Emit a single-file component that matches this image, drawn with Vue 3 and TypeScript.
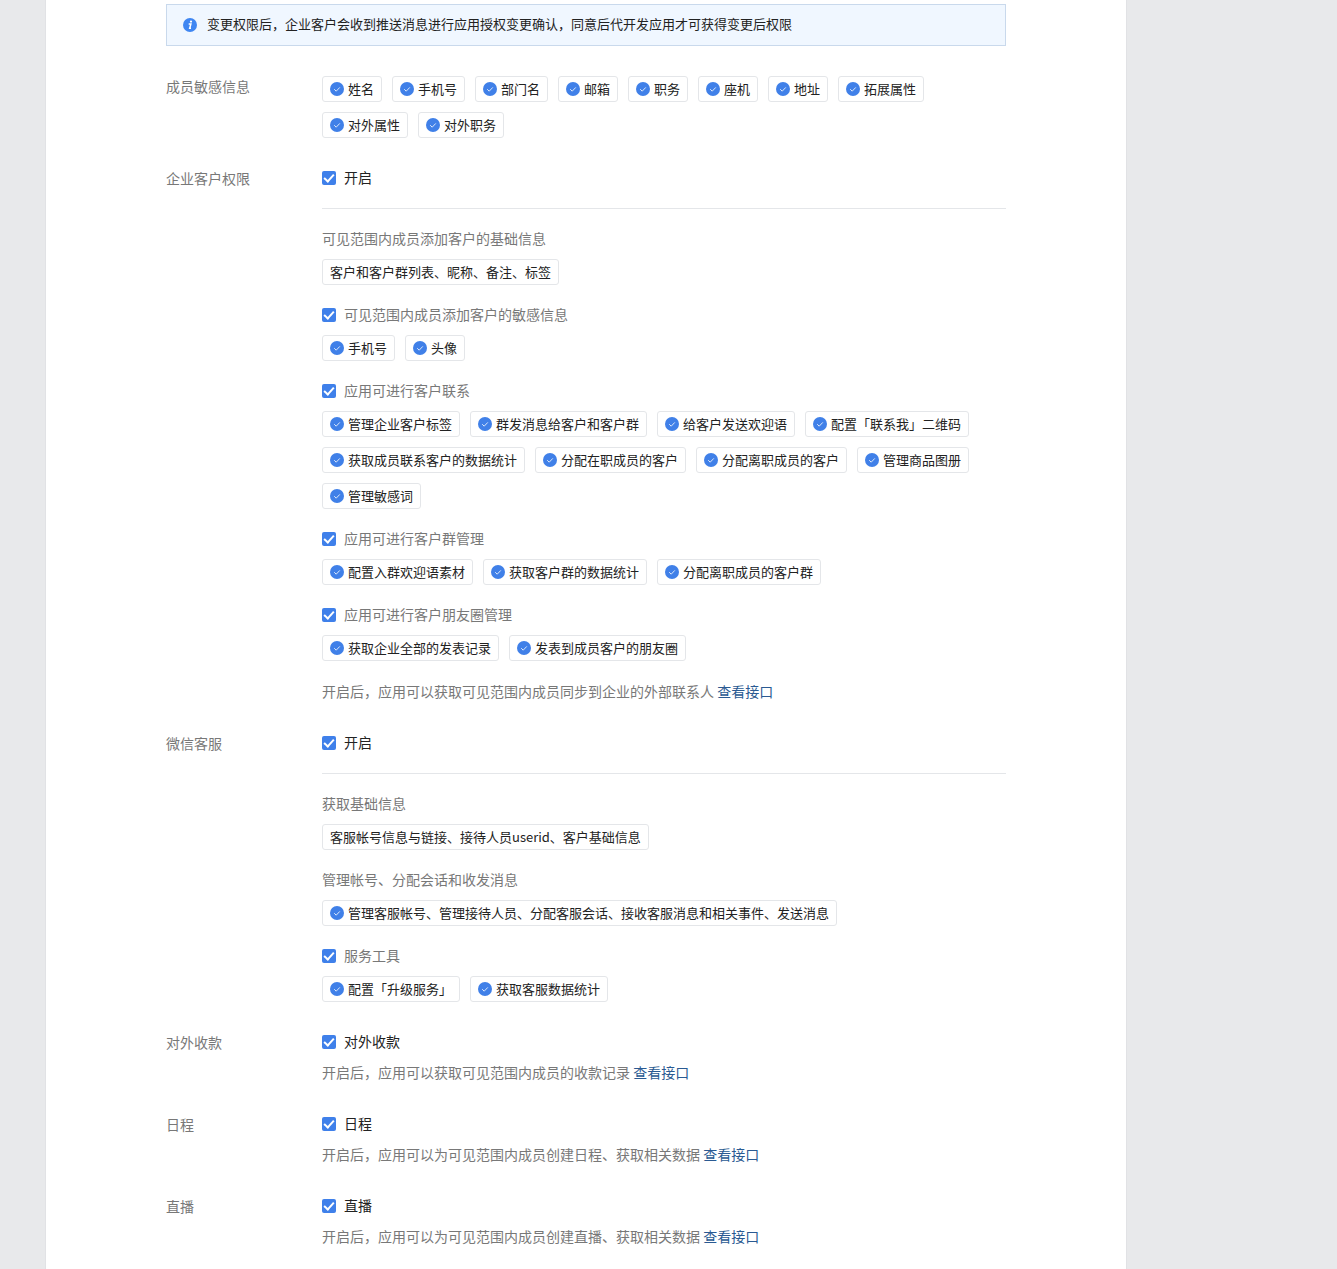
<script setup lang="ts">
interface Group {
  title: string
  checkable: boolean
  tags: string[]
  plain?: boolean
}
interface Section {
  label: string
  check: string
  divider?: boolean
  groups?: Group[]
  desc?: string
}

const sensitive = ['姓名', '手机号', '部门名', '邮箱', '职务', '座机', '地址', '拓展属性', '对外属性', '对外职务']

const sections: Section[] = [
  {
    label: '企业客户权限',
    check: '开启',
    divider: true,
    groups: [
      { title: '可见范围内成员添加客户的基础信息', checkable: false, plain: true, tags: ['客户和客户群列表、昵称、备注、标签'] },
      { title: '可见范围内成员添加客户的敏感信息', checkable: true, tags: ['手机号', '头像'] },
      {
        title: '应用可进行客户联系',
        checkable: true,
        tags: ['管理企业客户标签', '群发消息给客户和客户群', '给客户发送欢迎语', '配置「联系我」二维码', '获取成员联系客户的数据统计', '分配在职成员的客户', '分配离职成员的客户', '管理商品图册', '管理敏感词'],
      },
      { title: '应用可进行客户群管理', checkable: true, tags: ['配置入群欢迎语素材', '获取客户群的数据统计', '分配离职成员的客户群'] },
      { title: '应用可进行客户朋友圈管理', checkable: true, tags: ['获取企业全部的发表记录', '发表到成员客户的朋友圈'] },
    ],
    desc: '开启后，应用可以获取可见范围内成员同步到企业的外部联系人',
  },
  {
    label: '微信客服',
    check: '开启',
    divider: true,
    groups: [
      { title: '获取基础信息', checkable: false, plain: true, tags: ['客服帐号信息与链接、接待人员userid、客户基础信息'] },
      { title: '管理帐号、分配会话和收发消息', checkable: false, tags: ['管理客服帐号、管理接待人员、分配客服会话、接收客服消息和相关事件、发送消息'] },
      { title: '服务工具', checkable: true, tags: ['配置「升级服务」', '获取客服数据统计'] },
    ],
  },
  { label: '对外收款', check: '对外收款', desc: '开启后，应用可以获取可见范围内成员的收款记录' },
  { label: '日程', check: '日程', desc: '开启后，应用可以为可见范围内成员创建日程、获取相关数据' },
  { label: '直播', check: '直播', desc: '开启后，应用可以为可见范围内成员创建直播、获取相关数据' },
]
</script>

<template>
  <div class="page">
    <main class="panel">
      <div class="notice">
        <svg class="notice-icon" viewBox="0 0 14 14" aria-hidden="true">
          <circle cx="7" cy="7" r="7" fill="#3f86f2" />
          <circle cx="8" cy="3.6" r="1.15" fill="#fff" />
          <path d="M5.7 6h2.2l-1.2 4.3h1.3" fill="none" stroke="#fff" stroke-width="1.5" />
        </svg>
        <span class="notice-text">变更权限后，企业客户会收到推送消息进行应用授权变更确认，同意后代开发应用才可获得变更后权限</span>
      </div>

      <section class="row">
        <div class="label">成员敏感信息</div>
        <div class="body">
          <div class="tags">
            <span v-for="t in sensitive" :key="t" class="tag">
              <svg class="tick" viewBox="0 0 14 14" aria-hidden="true">
                <circle cx="7" cy="7" r="7" fill="#4080e8" />
                <path d="M4.2 7.2l2 2 3.6-3.8" fill="none" stroke="#dbe8fb" stroke-width="1" />
              </svg>
              <span class="tx">{{ t }}</span>
            </span>
          </div>
        </div>
      </section>

      <section v-for="s in sections" :key="s.label" class="row">
        <div class="label">{{ s.label }}</div>
        <div class="body">
          <label class="check strong"><input type="checkbox" checked /><span class="tx">{{ s.check }}</span></label>
          <div v-if="s.divider" class="divider"></div>
          <div v-for="g in s.groups" :key="g.title" class="group">
            <label v-if="g.checkable" class="check"><input type="checkbox" checked /><span class="tx">{{ g.title }}</span></label>
            <div v-else class="group-title">{{ g.title }}</div>
            <div class="tags">
              <span v-for="t in g.tags" :key="t" class="tag">
                <svg v-if="!g.plain" class="tick" viewBox="0 0 14 14" aria-hidden="true">
                  <circle cx="7" cy="7" r="7" fill="#4080e8" />
                  <path d="M4.2 7.2l2 2 3.6-3.8" fill="none" stroke="#dbe8fb" stroke-width="1" />
                </svg>
                <span class="tx">{{ t }}</span>
              </span>
            </div>
          </div>
          <p v-if="s.desc" class="desc">{{ s.desc }} <a class="link">查看接口</a></p>
        </div>
      </section>
    </main>
  </div>
</template>

<style>
html, body { margin: 0; background: #e8e9eb; }
</style>

<style scoped>
.page {
  height: 1269px;
  overflow: hidden;
  background: #e8e9eb;
  padding-left: 45px;
  box-sizing: border-box;
  font-family: "Noto Sans CJK SC", "Noto Sans", sans-serif;
}
.panel {
  width: 1082px;
  box-sizing: border-box;
  min-height: 1269px;
  background: #fff;
  border-left: 1px solid #e1e2e5;
  border-right: 1px solid #e1e2e5;
  padding: 4px 120px 0;
}
.notice {
  width: 840px;
  height: 42px;
  box-sizing: border-box;
  display: flex;
  align-items: center;
  gap: 10px;
  padding-left: 16px;
  background: #f0f7ff;
  border: 1px solid #c9d9ec;
  font-size: 13px;
  color: #222;
}
.notice-icon { width: 14px; height: 14px; flex: none; }
.notice-text { padding-bottom: 4px; }
.row { display: flex; margin-top: 30px; }
.label {
  width: 156px;
  flex: none;
  font-size: 14px;
  line-height: 20px;
  color: #787878;
}
.body { width: 684px; }
.tags { display: flex; flex-wrap: wrap; gap: 10px; }
.tag {
  display: inline-flex;
  align-items: center;
  gap: 4px;
  height: 26px;
  box-sizing: border-box;
  padding: 0 7px;
  background: #fff;
  border: 1px solid #e4e6e9;
  border-radius: 3px;
  font-size: 13px;
  color: #222;
  white-space: nowrap;
}
.tx { padding-bottom: 2px; }
.tick { width: 14px; height: 14px; flex: none; }
.check {
  display: flex;
  align-items: center;
  gap: 8px;
  height: 20px;
  font-size: 14px;
  color: #787878;
}
.check.strong { color: #222; }
.check input {
  appearance: none;
  width: 14px;
  height: 14px;
  margin: 0;
  flex: none;
  border-radius: 2px;
  background-color: #3f80ea;
  position: relative;
}
.check input::after {
  content: "";
  position: absolute;
  left: 4.2px;
  top: 1px;
  width: 4px;
  height: 8px;
  border: solid #fff;
  border-width: 0 2px 2px 0;
  transform: rotate(42deg);
}
.divider {
  height: 1px;
  background: #e4e6e9;
  margin: 20px 0;
}
.group { margin-top: 20px; }
.divider + .group { margin-top: 0; }
.group-title {
  height: 20px;
  line-height: 18px;
  font-size: 14px;
  color: #787878;
}
.group .tags { margin-top: 10px; }
.desc {
  margin: 11px 0 1px;
  height: 20px;
  font-size: 14px;
  line-height: 18px;
  color: #787878;
}
.group + .desc { margin-top: 21px; }
.link { color: #2a5a92; }
</style>
